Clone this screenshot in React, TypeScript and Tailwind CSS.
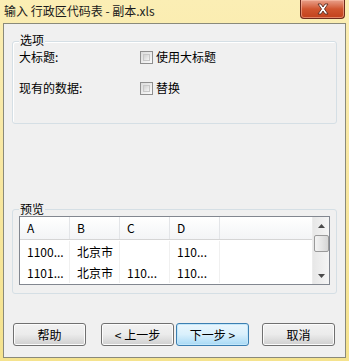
import React from "react";

const font = { fontFamily: '"Microsoft YaHei", "Noto Sans CJK SC", "Noto Sans", sans-serif' };

function Checkbox() {
  return (
    <span className="inline-block w-[13px] h-[13px] border border-[#8f8f8f] bg-gradient-to-br from-[#dcdcdc] to-[#fafafa] p-[2px] shrink-0">
      <span className="block w-full h-full border border-[#c8c8c8] bg-gradient-to-br from-[#d2d2d2] to-[#f4f4f4]" />
    </span>
  );
}

function Btn({ children, primary }: { children: React.ReactNode; primary?: boolean }) {
  return (
    <button
      className={
        primary
          ? "w-[73px] h-[23px] rounded-[3px] border border-[#3c7fb1] bg-gradient-to-b from-[#eaf6fd] via-[#d9f0fc] to-[#a7d9f5] text-[12px] text-black flex items-center justify-center shadow-[inset_0_0_0_1px_#c3e7fa]"
          : "w-[73px] h-[23px] rounded-[3px] border border-[#707070] bg-gradient-to-b from-[#f2f2f2] via-[#ebebeb] to-[#cfcfcf] text-[12px] text-black flex items-center justify-center shadow-[inset_0_0_0_1px_#fcfcfc]"
      }
      style={font}
    >
      {children}
    </button>
  );
}

export default function App() {
  const cols = ["A", "B", "C", "D"];
  const rows = [
    ["1100...", "北京市", "", "110..."],
    ["1101...", "北京市", "110...", "110..."],
  ];
  return (
    <div
      className="w-[349px] h-[361px] bg-gradient-to-b from-[#fbeeb4] via-[#f8e7a0] to-[#f5e38e] flex flex-col text-black"
      style={font}
    >
      {/* title bar */}
      <div className="h-[23px] flex items-start justify-between pl-[4px] pr-[4px]">
        <div className="text-[12px] leading-[16px] mt-[3px] text-[#1a1a1a]">输入 行政区代码表 - 副本.xls</div>
        <div className="w-[45px] h-[19px] rounded-b-[4px] border border-[#6d2a1c] border-t-0 bg-gradient-to-b from-[#e8a08a] via-[#d0552f] to-[#c2411c] flex items-center justify-center shadow-[inset_0_0_0_1px_rgba(255,200,180,0.5)]">
          <svg width="14" height="12" viewBox="0 0 14 12">
            <path d="M2 1 L5 1 L7 4 L9 1 L12 1 L8.5 6 L12 11 L9 11 L7 8 L5 11 L2 11 L5.5 6 Z" fill="#fff" stroke="#5a2a20" strokeWidth="0.9" strokeLinejoin="round" />
          </svg>
        </div>
      </div>
      {/* client */}
      <div className="mx-[3px] h-[335px] border border-[#8a8a7a] bg-[#f0f0f0] flex flex-col px-[8px]">
        {/* options group */}
        <div className="relative mt-[17px] h-[83px] border border-[#d5dfe5] rounded-[3px] shadow-[inset_1px_1px_0_#fff]">
          <div className="absolute left-[6px] top-[-8px] bg-[#f0f0f0] px-[1px] text-[12px] leading-[12px]">选项</div>
          <div className="pl-[6px] pt-[8px] flex flex-col gap-[17px] text-[12px] leading-[14px]">
            <div className="flex items-center">
              <span className="w-[121px]">大标题:</span>
              <Checkbox />
              <span className="ml-[3px]">使用大标题</span>
            </div>
            <div className="flex items-center">
              <span className="w-[121px]">现有的数据:</span>
              <Checkbox />
              <span className="ml-[3px]">替换</span>
            </div>
          </div>
        </div>
        {/* preview group */}
        <div className="relative mt-[85px] h-[85px] border border-[#d5dfe5] rounded-[3px] px-[6px] pt-[6px]">
          <div className="absolute left-[6px] top-[-7px] bg-[#f0f0f0] px-[1px] text-[12px] leading-[12px]">预览</div>
          <div className="h-[69px] border border-[#828790] bg-white flex">
            <div className="flex-1 flex flex-col">
              <div className="h-[23px] flex bg-gradient-to-b from-white to-[#f3f4f6] border-b border-[#d5d5d5]">
                {cols.map((c) => (
                  <div key={c} className="w-[50px] border-r border-[#e3e5e8] pl-[7px] flex items-center text-[12px]">
                    {c}
                  </div>
                ))}
                <div className="flex-1" />
              </div>
              <div className="pt-[1px]">
                {rows.map((r, i) => (
                  <div key={i} className="h-[21px] flex text-[12px] items-center">
                    {r.map((v, j) => (
                      <div key={j} className="w-[50px] pl-[7px] h-full flex items-center border-r border-[#f0f0f0] whitespace-nowrap">
                        {v}
                      </div>
                    ))}
                  </div>
                ))}
              </div>
            </div>
            <div className="w-[17px] bg-gradient-to-r from-[#e7e7e7] to-[#f5f5f5] flex flex-col items-center border-l border-[#ececec]">
              <div className="h-[17px] flex items-center justify-center">
                <svg width="7" height="4" viewBox="0 0 7 4"><path d="M0 4 L3.5 0 L7 4 Z" fill="#4a4a4a" /></svg>
              </div>
              <div className="w-[15px] h-[17px] mt-[1px] rounded-[2px] border border-[#9a9a9a] bg-gradient-to-r from-[#f3f3f3] via-[#e6e6e6] to-[#d6d6d6]" />
              <div className="flex-1" />
              <div className="h-[17px] flex items-center justify-center">
                <svg width="7" height="4" viewBox="0 0 7 4"><path d="M0 0 L7 0 L3.5 4 Z" fill="#4a4a4a" /></svg>
              </div>
            </div>
          </div>
        </div>
        {/* buttons */}
        <div className="mt-[29px] flex items-center pl-[1px]">
          <Btn>帮助</Btn>
          <div className="w-[15px]" />
          <Btn>&lt; 上一步</Btn>
          <div className="w-[2px]" />
          <Btn primary>下一步 &gt;</Btn>
          <div className="w-[13px]" />
          <Btn>取消</Btn>
        </div>
      </div>
    </div>
  );
}
